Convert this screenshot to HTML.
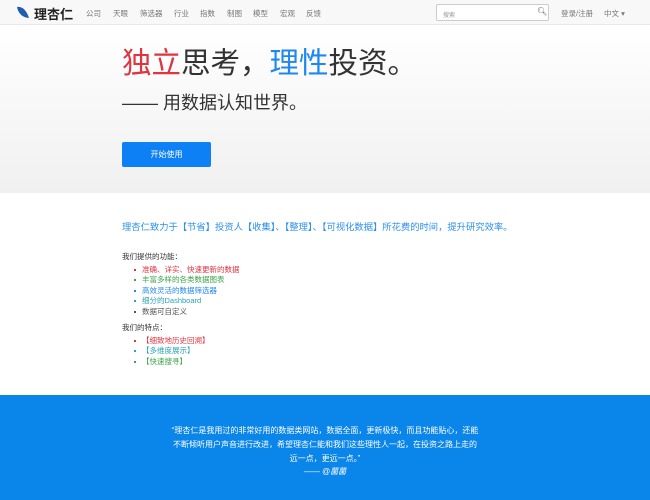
<!DOCTYPE html><html><head><meta charset="utf-8"><style>
*{margin:0;padding:0;box-sizing:border-box}
body{width:650px;height:500px;overflow:hidden;font-family:"Liberation Sans","Noto Sans CJK SC",sans-serif;background:#fff;position:relative}
.nav{height:25px;background:#f8f8f8;border-bottom:1px solid #e7e7e7;position:relative}
.abs{position:absolute;white-space:nowrap}
.nav .m{font-size:7.5px;color:#777;top:8px}
.hero{position:absolute;top:25px;left:0;width:650px;height:168px;background:linear-gradient(#fff,#f0f0f0)}
ul{list-style:none}
li{position:relative;padding-left:20px;height:10.5px;line-height:10.5px}
li:before{content:"";position:absolute;left:12px;top:4px;width:2px;height:2px;background:currentColor}
.blue{position:absolute;top:395px;left:0;width:650px;height:105px;background:#0a85ea}
</style></head><body>
<div class="nav">
<svg class="abs" style="left:16px;top:6px" width="14" height="13" viewBox="0 0 14 13"><path d="M1 1 Q9 0 13 12 Q3 11 1 1Z" fill="#1d5fae"/></svg>
<div class="abs" style="left:34px;top:4px;font-size:13px;font-weight:bold;color:#222">理杏仁</div>
<div class="abs m" style="left:86px">公司</div><div class="abs m" style="left:113px">天眼</div><div class="abs m" style="left:140px">筛选器</div><div class="abs m" style="left:174px">行业</div><div class="abs m" style="left:200px">指数</div><div class="abs m" style="left:227px">制图</div><div class="abs m" style="left:253px">模型</div><div class="abs m" style="left:280px">宏观</div><div class="abs m" style="left:306px">反馈</div>
<div class="abs" style="left:436px;top:4px;width:113px;height:17px;border:1px solid #ccc;border-radius:2px;background:#fff;font-size:6px;color:#999;padding:5px 0 0 6px">搜索</div>
<div class="abs" style="left:537px;top:7px;font-size:8px;color:#555">&#x1F50D;&#xFE0E;</div>
<div class="abs m" style="left:561px">登录/注册</div><div class="abs m" style="left:604px">中文 ▾</div>
</div>
<div class="hero">
<div class="abs" style="left:122px;top:21px;font-size:29.5px;color:#333;line-height:36px"><span style="color:#e0343f">独立</span>思考，<span style="color:#1e88f0">理性</span>投资。</div>
<div class="abs" style="left:122px;top:66px;font-size:18px;color:#333;line-height:24px">—— 用数据认知世界。</div>
<div class="abs" style="left:122px;top:117px;width:89px;height:25px;background:#0d80f5;border-radius:2px;color:#fff;font-size:8px;text-align:center;line-height:25px">开始使用</div>
</div>
<div class="abs" style="left:122px;top:219px;font-size:9.3px;color:#2a8ff0">理杏仁致力于【节省】投资人【收集】、【整理】、【可视化数据】所花费的时间，提升研究效率。</div>
<div class="abs" style="left:122px;top:252px;font-size:7.5px;color:#333;line-height:10.5px">我们提供的功能：
<ul style="margin-top:2px"><li style="color:#e0343f">准确、详实、快速更新的数据</li><li style="color:#3aa54a">丰富多样的各类数据图表</li><li style="color:#1e88f0">高效灵活的数据筛选器</li><li style="color:#2aa3b8">细分的Dashboard</li><li style="color:#555">数据可自定义</li></ul>
<div style="margin-top:6px">我们的特点：</div>
<ul style="margin-top:2px"><li style="color:#e0343f">【细致地历史回溯】</li><li style="color:#2aa3b8">【多维度展示】</li><li style="color:#3aa54a">【快速搜寻】</li></ul>
</div>
<div class="blue">
<div class="abs" style="left:0;width:650px;top:29px;text-align:center;font-size:8px;color:#fff;line-height:13.8px">“理杏仁是我用过的非常好用的数据类网站，数据全面，更新极快，而且功能贴心，还能<br>不断倾听用户声音进行改进，希望理杏仁能和我们这些理性人一起，在投资之路上走的<br>远一点，更远一点。”<br>—— <i>@菌菌</i></div>
</div>
</body></html>
